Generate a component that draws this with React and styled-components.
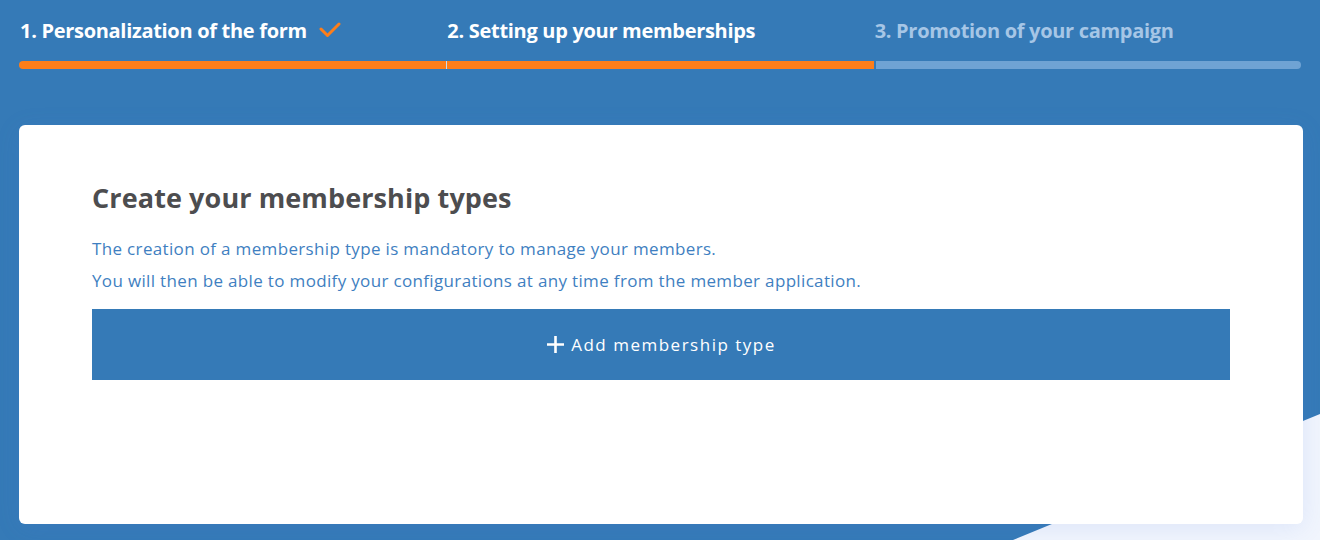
import React from "react";
import styled, { createGlobalStyle } from "styled-components";

const Global = createGlobalStyle`
  html, body { margin: 0; padding: 0; }
  body { font-family: "Open Sans", "Noto Sans", sans-serif; background: #357ab7; }
  * { box-sizing: border-box; }
`;

const Page = styled.div`
  position: relative;
  width: 1320px;
  height: 540px;
  overflow: hidden;
  background: #357ab7;
  padding: 0 17px 0 19px;
  display: flex;
  flex-direction: column;
  &::before {
    content: "";
    position: absolute;
    inset: 0;
    background: linear-gradient(160deg, #e4ecfb 0%, #f1f5fd 60%);
    clip-path: polygon(1013px 540px, 1320px 414px, 1320px 540px);
  }
`;

const Stepper = styled.div`
  position: relative;
  display: flex;
  width: 1282px;
  padding-top: 15px;
`;

const Step = styled.div`
  flex: 1;
  display: flex;
  flex-direction: column;
`;

const Label = styled.div`
  display: flex;
  align-items: center;
  gap: 12px;
  padding-left: 1px;
  height: 30px;
  font-size: 20px;
  font-weight: 700;
  letter-spacing: -0.3px;
  color: ${(p) => (p.$muted ? "#a6c6e6" : "#ffffff")};
  white-space: nowrap;
`;

const Bar = styled.div`
  margin-top: 16px;
  height: 8px;
  background: ${(p) => (p.$done ? "#fd7e1a" : "#6fa3d4")};
  border-left: ${(p) =>
    p.$first ? "none" : p.$last ? "2px solid #357ab7" : "1px solid #c9dcef"};
  border-radius: ${(p) =>
    p.$first ? "4px 0 0 4px" : p.$last ? "0 4px 4px 0" : "0"};
`;

const Card = styled.div`
  position: relative;
  margin-top: 56px;
  height: 399px;
  background: #ffffff;
  border-radius: 6px;
  box-shadow: 0 4px 24px rgba(80, 120, 220, 0.12);
  padding: 0 73px;
  display: flex;
  flex-direction: column;
`;

const Title = styled.h1`
  margin: 55px 0 0;
  font-size: 27px;
  font-weight: 700;
  line-height: 36px;
  letter-spacing: 0.1px;
  color: #4d4d4f;
`;

const Text = styled.p`
  margin: 0;
  font-size: 17px;
  line-height: 32px;
  letter-spacing: 0.34px;
  color: #3f7fc1;
`;

const Texts = styled.div`
  margin-top: 17px;
`;

const AddButton = styled.button`
  margin-top: 12px;
  height: 71px;
  width: 100%;
  border: none;
  background: #357ab7;
  color: #ffffff;
  font-family: inherit;
  font-size: 17px;
  font-weight: 500;
  letter-spacing: 1.5px;
  display: flex;
  align-items: center;
  justify-content: center;
  gap: 6px;
  cursor: pointer;
`;

const Check = () => (
  <svg width="22" height="16" viewBox="0 0 22 16">
    <polyline
      points="2,7 8.5,13.5 20,2"
      fill="none"
      stroke="#fd7e1a"
      strokeWidth="3"
      strokeLinecap="round"
      strokeLinejoin="round"
    />
  </svg>
);

const Plus = () => (
  <svg width="19" height="19" viewBox="0 0 19 19">
    <path d="M9.5 1v17M1 9.5h17" stroke="#fff" strokeWidth="2.6" />
  </svg>
);

export default function App() {
  return (
    <>
      <Global />
      <Page>
        <Stepper>
          <Step>
            <Label>
              1. Personalization of the form <Check />
            </Label>
            <Bar $done $first />
          </Step>
          <Step>
            <Label>2. Setting up your memberships</Label>
            <Bar $done />
          </Step>
          <Step>
            <Label $muted>3. Promotion of your campaign</Label>
            <Bar $last />
          </Step>
        </Stepper>
        <Card>
          <Title>Create your membership types</Title>
          <Texts>
            <Text>
              The creation of a membership type is mandatory to manage your members.
            </Text>
            <Text>
              You will then be able to modify your configurations at any time from the member application.
            </Text>
          </Texts>
          <AddButton>
            <Plus />
            Add membership type
          </AddButton>
        </Card>
      </Page>
    </>
  );
}
